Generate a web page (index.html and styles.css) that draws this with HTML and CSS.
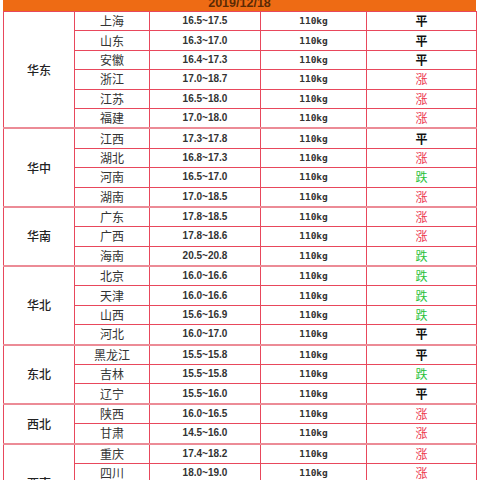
FILE: index.html
```html
<!DOCTYPE html>
<html lang="zh">
<head>
<meta charset="utf-8">
<link rel="stylesheet" href="styles.css">
</head>
<body>
<div class="wrap">
  <div class="title"><span class="title-text">2019/12/18</span></div>
  <table class="price">
    <colgroup>
      <col class="c1"><col class="c2"><col class="c3"><col class="c4"><col class="c5">
    </colgroup>
    <tbody>
      <tr><td class="grp" rowspan="6">华东</td><td class="reg">上海</td><td class="rng">16.5~17.5</td><td class="wt">110kg</td><td class="flat">平</td></tr>
      <tr><td class="reg">山东</td><td class="rng">16.3~17.0</td><td class="wt">110kg</td><td class="flat">平</td></tr>
      <tr><td class="reg">安徽</td><td class="rng">16.4~17.3</td><td class="wt">110kg</td><td class="flat">平</td></tr>
      <tr><td class="reg">浙江</td><td class="rng">17.0~18.7</td><td class="wt">110kg</td><td class="up">涨</td></tr>
      <tr><td class="reg">江苏</td><td class="rng">16.5~18.0</td><td class="wt">110kg</td><td class="up">涨</td></tr>
      <tr class="end"><td class="reg">福建</td><td class="rng">17.0~18.0</td><td class="wt">110kg</td><td class="up">涨</td></tr>

      <tr><td class="grp" rowspan="4">华中</td><td class="reg">江西</td><td class="rng">17.3~17.8</td><td class="wt">110kg</td><td class="flat">平</td></tr>
      <tr><td class="reg">湖北</td><td class="rng">16.8~17.3</td><td class="wt">110kg</td><td class="up">涨</td></tr>
      <tr><td class="reg">河南</td><td class="rng">16.5~17.0</td><td class="wt">110kg</td><td class="down">跌</td></tr>
      <tr class="end"><td class="reg">湖南</td><td class="rng">17.0~18.5</td><td class="wt">110kg</td><td class="up">涨</td></tr>

      <tr><td class="grp" rowspan="3">华南</td><td class="reg">广东</td><td class="rng">17.8~18.5</td><td class="wt">110kg</td><td class="up">涨</td></tr>
      <tr><td class="reg">广西</td><td class="rng">17.8~18.6</td><td class="wt">110kg</td><td class="up">涨</td></tr>
      <tr class="end"><td class="reg">海南</td><td class="rng">20.5~20.8</td><td class="wt">110kg</td><td class="down">跌</td></tr>

      <tr><td class="grp" rowspan="4">华北</td><td class="reg">北京</td><td class="rng">16.0~16.6</td><td class="wt">110kg</td><td class="down">跌</td></tr>
      <tr><td class="reg">天津</td><td class="rng">16.0~16.6</td><td class="wt">110kg</td><td class="down">跌</td></tr>
      <tr><td class="reg">山西</td><td class="rng">15.6~16.9</td><td class="wt">110kg</td><td class="down">跌</td></tr>
      <tr class="end"><td class="reg">河北</td><td class="rng">16.0~17.0</td><td class="wt">110kg</td><td class="flat">平</td></tr>

      <tr><td class="grp" rowspan="3">东北</td><td class="reg">黑龙江</td><td class="rng">15.5~15.8</td><td class="wt">110kg</td><td class="flat">平</td></tr>
      <tr><td class="reg">吉林</td><td class="rng">15.5~15.8</td><td class="wt">110kg</td><td class="down">跌</td></tr>
      <tr class="end"><td class="reg">辽宁</td><td class="rng">15.5~16.0</td><td class="wt">110kg</td><td class="flat">平</td></tr>

      <tr><td class="grp" rowspan="2">西北</td><td class="reg">陕西</td><td class="rng">16.0~16.5</td><td class="wt">110kg</td><td class="up">涨</td></tr>
      <tr class="end"><td class="reg">甘肃</td><td class="rng">14.5~16.0</td><td class="wt">110kg</td><td class="up">涨</td></tr>

      <tr><td class="grp" rowspan="4">西南</td><td class="reg">重庆</td><td class="rng">17.4~18.2</td><td class="wt">110kg</td><td class="up">涨</td></tr>
      <tr><td class="reg">四川</td><td class="rng">18.0~19.0</td><td class="wt">110kg</td><td class="up">涨</td></tr>
      <tr><td class="reg">贵州</td><td class="rng">17.5~18.5</td><td class="wt">110kg</td><td class="up">涨</td></tr>
      <tr class="end"><td class="reg">云南</td><td class="rng">17.0~18.0</td><td class="wt">110kg</td><td class="up">涨</td></tr>
    </tbody>
  </table>
</div>
</body>
</html>
```
FILE: styles.css
```css
html, body {
  margin: 0;
  padding: 0;
  background: #ffffff;
}
body {
  height: 480px;
  overflow: hidden;
  font-family: "Noto Sans CJK SC", "Noto Sans", sans-serif;
}
.wrap {
  width: 473px;
  margin-left: 3px;
}
.title {
  height: 11px;
  background: #ee6b14;
  overflow: hidden;
  text-align: center;
}
.title-text {
  display: block;
  margin-top: -4px;
  font-family: "Liberation Sans", Arial, sans-serif;
  font-weight: bold;
  font-size: 12.5px;
  line-height: 14px;
  color: #5b2a05;
}
.price {
  width: 473px;
  border-collapse: collapse;
  table-layout: fixed;
}
.c1 { width: 71px; }
.c2 { width: 75px; }
.c3 { width: 111px; }
.c4 { width: 106px; }
.c5 { width: 110px; }
.price td {
  border: 1px solid #e8485c;
  height: 18.4px;
  padding: 0;
  text-align: center;
  vertical-align: middle;
  font-size: 12px;
  line-height: 14px;
  color: #333333;
}
.price tr.end td,
.price td.grp {
  border-bottom: 2px solid #ec8b96;
}
.price td.grp {
  font-size: 12px;
  font-weight: 500;
  color: #222222;
}
.price td.reg {
  color: #333333;
}
.price td.rng {
  font-family: "Liberation Sans", Arial, sans-serif;
  font-weight: bold;
  font-size: 10px;
  color: #333333;
}
.price td.wt {
  font-family: "DejaVu Sans Mono", monospace;
  font-weight: bold;
  font-size: 9.5px;
  color: #333333;
}
.price td.flat {
  font-weight: bold;
  color: #111111;
}
.price td.up {
  color: #ec3650;
}
.price td.down {
  color: #28c13a;
}
```
